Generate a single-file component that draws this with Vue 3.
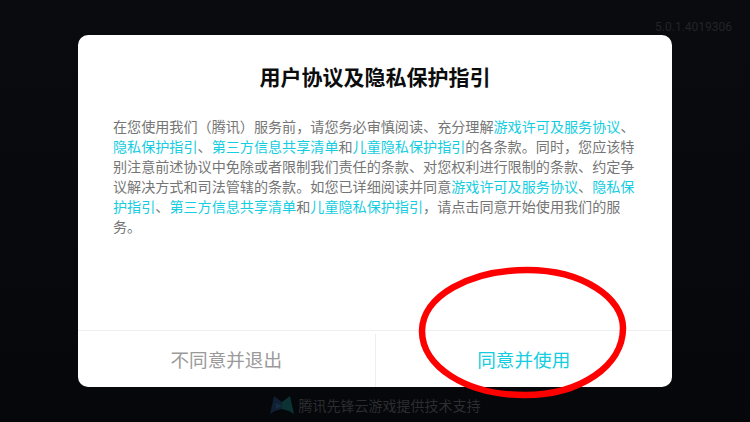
<script setup>
const link1 = '游戏许可及服务协议'
const link2 = '隐私保护指引'
const link3 = '第三方信息共享清单'
const link4 = '儿童隐私保护指引'
</script>

<template>
  <div class="screen">
    <div class="version">5.0.1.4019306</div>
    <main class="center">
      <section class="modal">
        <h1 class="title">用户协议及隐私保护指引</h1>
        <p class="body">在您使用我们（腾讯）服务前，请您务必审慎阅读、充分理解<a class="link">{{ link1 }}</a>、<a class="link">{{ link2 }}</a>、<a class="link">{{ link3 }}</a>和<a class="link">{{ link4 }}</a>的各条款。同时，您应该特别注意前述协议中免除或者限制我们责任的条款、对您权利进行限制的条款、约定争议解决方式和司法管辖的条款。如您已详细阅读并同意<a class="link">{{ link1 }}</a>、<a class="link">{{ link2 }}</a>、<a class="link">{{ link3 }}</a>和<a class="link">{{ link4 }}</a>，请点击同意开始使用我们的服务。</p>
        <div class="actions">
          <button class="btn decline">不同意并退出</button>
          <span class="divider"></span>
          <button class="btn accept">同意并使用</button>
        </div>
      </section>
    </main>
    <footer class="footer">
      <svg class="logo" viewBox="0 0 24 19" width="24" height="19">
        <path d="M0 19 L4 1 L12 7 L12 14 L5 16 Z" fill="#101f33" />
        <path d="M24 19 L20 1 L12 7 L12 14 L19 16 Z" fill="#0c3234" />
        <path d="M6 8 L12 11 L6 14 Z" fill="#143040" />
      </svg>
      <span>腾讯先锋云游戏提供技术支持</span>
    </footer>
    <svg class="circle" viewBox="0 0 750 422" width="750" height="422">
      <path d="M527 270 C583 270 623 298 623 328 C623 366 580 395 525 395 C465 395 422 366 422 331 C422 296 470 270 527 270 Z" fill="none" stroke="#fe0000" stroke-width="6.5" />
    </svg>
  </div>
</template>

<style>
html, body { margin: 0; background: #07090c; }
</style>

<style scoped>
.screen {
  position: relative;
  width: 750px;
  height: 422px;
  overflow: hidden;
  background: linear-gradient(180deg, #090b0e 0%, #07090c 50%, #05070a 100%);
  display: flex;
  flex-direction: column;
  font-family: "Noto Sans CJK SC", "Noto Sans", sans-serif;
}
.version {
  position: absolute;
  top: 20px;
  right: 18px;
  font: 12px/14px Roboto, sans-serif;
  color: #222427;
}
.center {
  padding: 35px 78px 0;
}
.modal {
  height: 352px;
  box-sizing: border-box;
  background: #fff;
  border-radius: 10px;
  display: flex;
  flex-direction: column;
  overflow: hidden;
}
.title {
  margin: 0;
  padding-top: 26px;
  font-size: 21px;
  line-height: 30px;
  font-weight: 700;
  color: #0c0c0c;
  text-align: center;
}
.body {
  margin: 0;
  padding: 25px 35px 0;
  font-size: 14.1px;
  line-height: 20px;
  color: #757575;
  flex: 1;
}
.link { color: #14cde0; }
.actions {
  display: flex;
  height: 56px;
  border-top: 1px solid #eeeeee;
}
.btn {
  flex: 1;
  min-width: 0;
  border: 0;
  background: none;
  font: inherit;
  font-size: 18.6px;
  padding: 0 0 1px;
}
.divider {
  flex: none;
  width: 1px;
  margin-top: 3px;
  background: #eeeeee;
}
.decline { color: #9a9a9a; }
.accept { color: #14cde0; }
.footer {
  height: 35px;
  box-sizing: border-box;
  display: flex;
  align-items: center;
  justify-content: center;
  gap: 5px;
  font-size: 14px;
  color: #2c2d30;
}
.logo { flex: none; }
.circle {
  position: absolute;
  inset: 0;
  pointer-events: none;
}
</style>
